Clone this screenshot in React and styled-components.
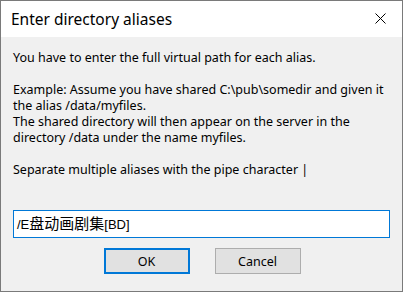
import React from "react";
import styled, { createGlobalStyle } from "styled-components";

const Global = createGlobalStyle`
  html, body { margin: 0; padding: 0; background: #ffffff; }
  body { font-family: "Noto Sans", "Liberation Sans", sans-serif; }
  * { box-sizing: border-box; }
`;

const Window = styled.div`
  width: 403px;
  height: 292px;
  border: 1px solid #7a7a7a;
  display: flex;
  flex-direction: column;
  background: #f0f0f0;
`;

const TitleBar = styled.div`
  height: 36px;
  flex: none;
  background: #ffffff;
  display: flex;
  align-items: center;
  justify-content: space-between;
  padding: 0 0 1px 10px;
`;

const Title = styled.div`
  font-family: "Noto Sans", sans-serif;
  font-size: 15.5px;
  color: #000;
`;

const CloseButton = styled.div`
  width: 46px;
  height: 35px;
  display: flex;
  align-items: center;
  justify-content: center;
  margin-right: -1px;
`;

const Body = styled.div`
  flex: 1;
  display: flex;
  flex-direction: column;
  padding: 13px 12px 0 12px;
`;

const Message = styled.div`
  font-family: "Noto Sans", sans-serif;
  font-size: 12.5px;
  line-height: 16px;
  color: #000;
  min-height: 128px;
`;

const Line = styled.div`
  height: 16px;
  white-space: pre;
`;

const Field = styled.div`
  margin-top: 32px;
  height: 28px;
  border: 1px solid #0078d7;
  background: #ffffff;
  display: flex;
  align-items: center;
  padding-left: 3px;
  color: #000;
`;

const FieldText = styled.div`
  line-height: 20px;
  white-space: pre;
`;

const Latin = styled.span`
  font-family: "Liberation Sans", sans-serif;
  font-size: 13px;
`;

const Cjk = styled.span`
  font-family: "Noto Sans CJK SC", sans-serif;
  font-size: 15px;
`;

const ButtonRow = styled.div`
  margin-top: 10px;
  display: flex;
  justify-content: center;
  gap: 25px;
  padding-left: 1px;
`;

const Button = styled.div`
  width: 86px;
  height: 26px;
  background: #e1e1e1;
  border: ${(p) => (p.$default ? "2px solid #0078d7" : "1px solid #adadad")};
  display: flex;
  align-items: center;
  justify-content: center;
  font-family: "Noto Sans", sans-serif;
  font-size: 12.5px;
  color: #000;
`;

export default function App() {
  const lines = [
    "You have to enter the full virtual path for each alias.",
    "",
    "Example: Assume you have shared C:\\pub\\somedir and given it",
    "the alias /data/myfiles.",
    "The shared directory will then appear on the server in the",
    "directory /data under the name myfiles.",
    "",
    "Separate multiple aliases with the pipe character |",
  ];
  return (
    <>
      <Global />
      <Window>
        <TitleBar>
          <Title>Enter directory aliases</Title>
          <CloseButton>
            <svg width="11" height="11" viewBox="0 0 11 11">
              <path d="M0.5 0.5 L10.5 10.5 M10.5 0.5 L0.5 10.5" stroke="#000" strokeWidth="1" fill="none" />
            </svg>
          </CloseButton>
        </TitleBar>
        <Body>
          <Message>
            {lines.map((l, i) => (
              <Line key={i}>{l}</Line>
            ))}
          </Message>
          <Field>
            <FieldText>
              <Latin>/E</Latin>
              <Cjk>盘动画剧集</Cjk>
              <Latin>[BD]</Latin>
            </FieldText>
          </Field>
          <ButtonRow>
            <Button $default>OK</Button>
            <Button>Cancel</Button>
          </ButtonRow>
        </Body>
      </Window>
    </>
  );
}
